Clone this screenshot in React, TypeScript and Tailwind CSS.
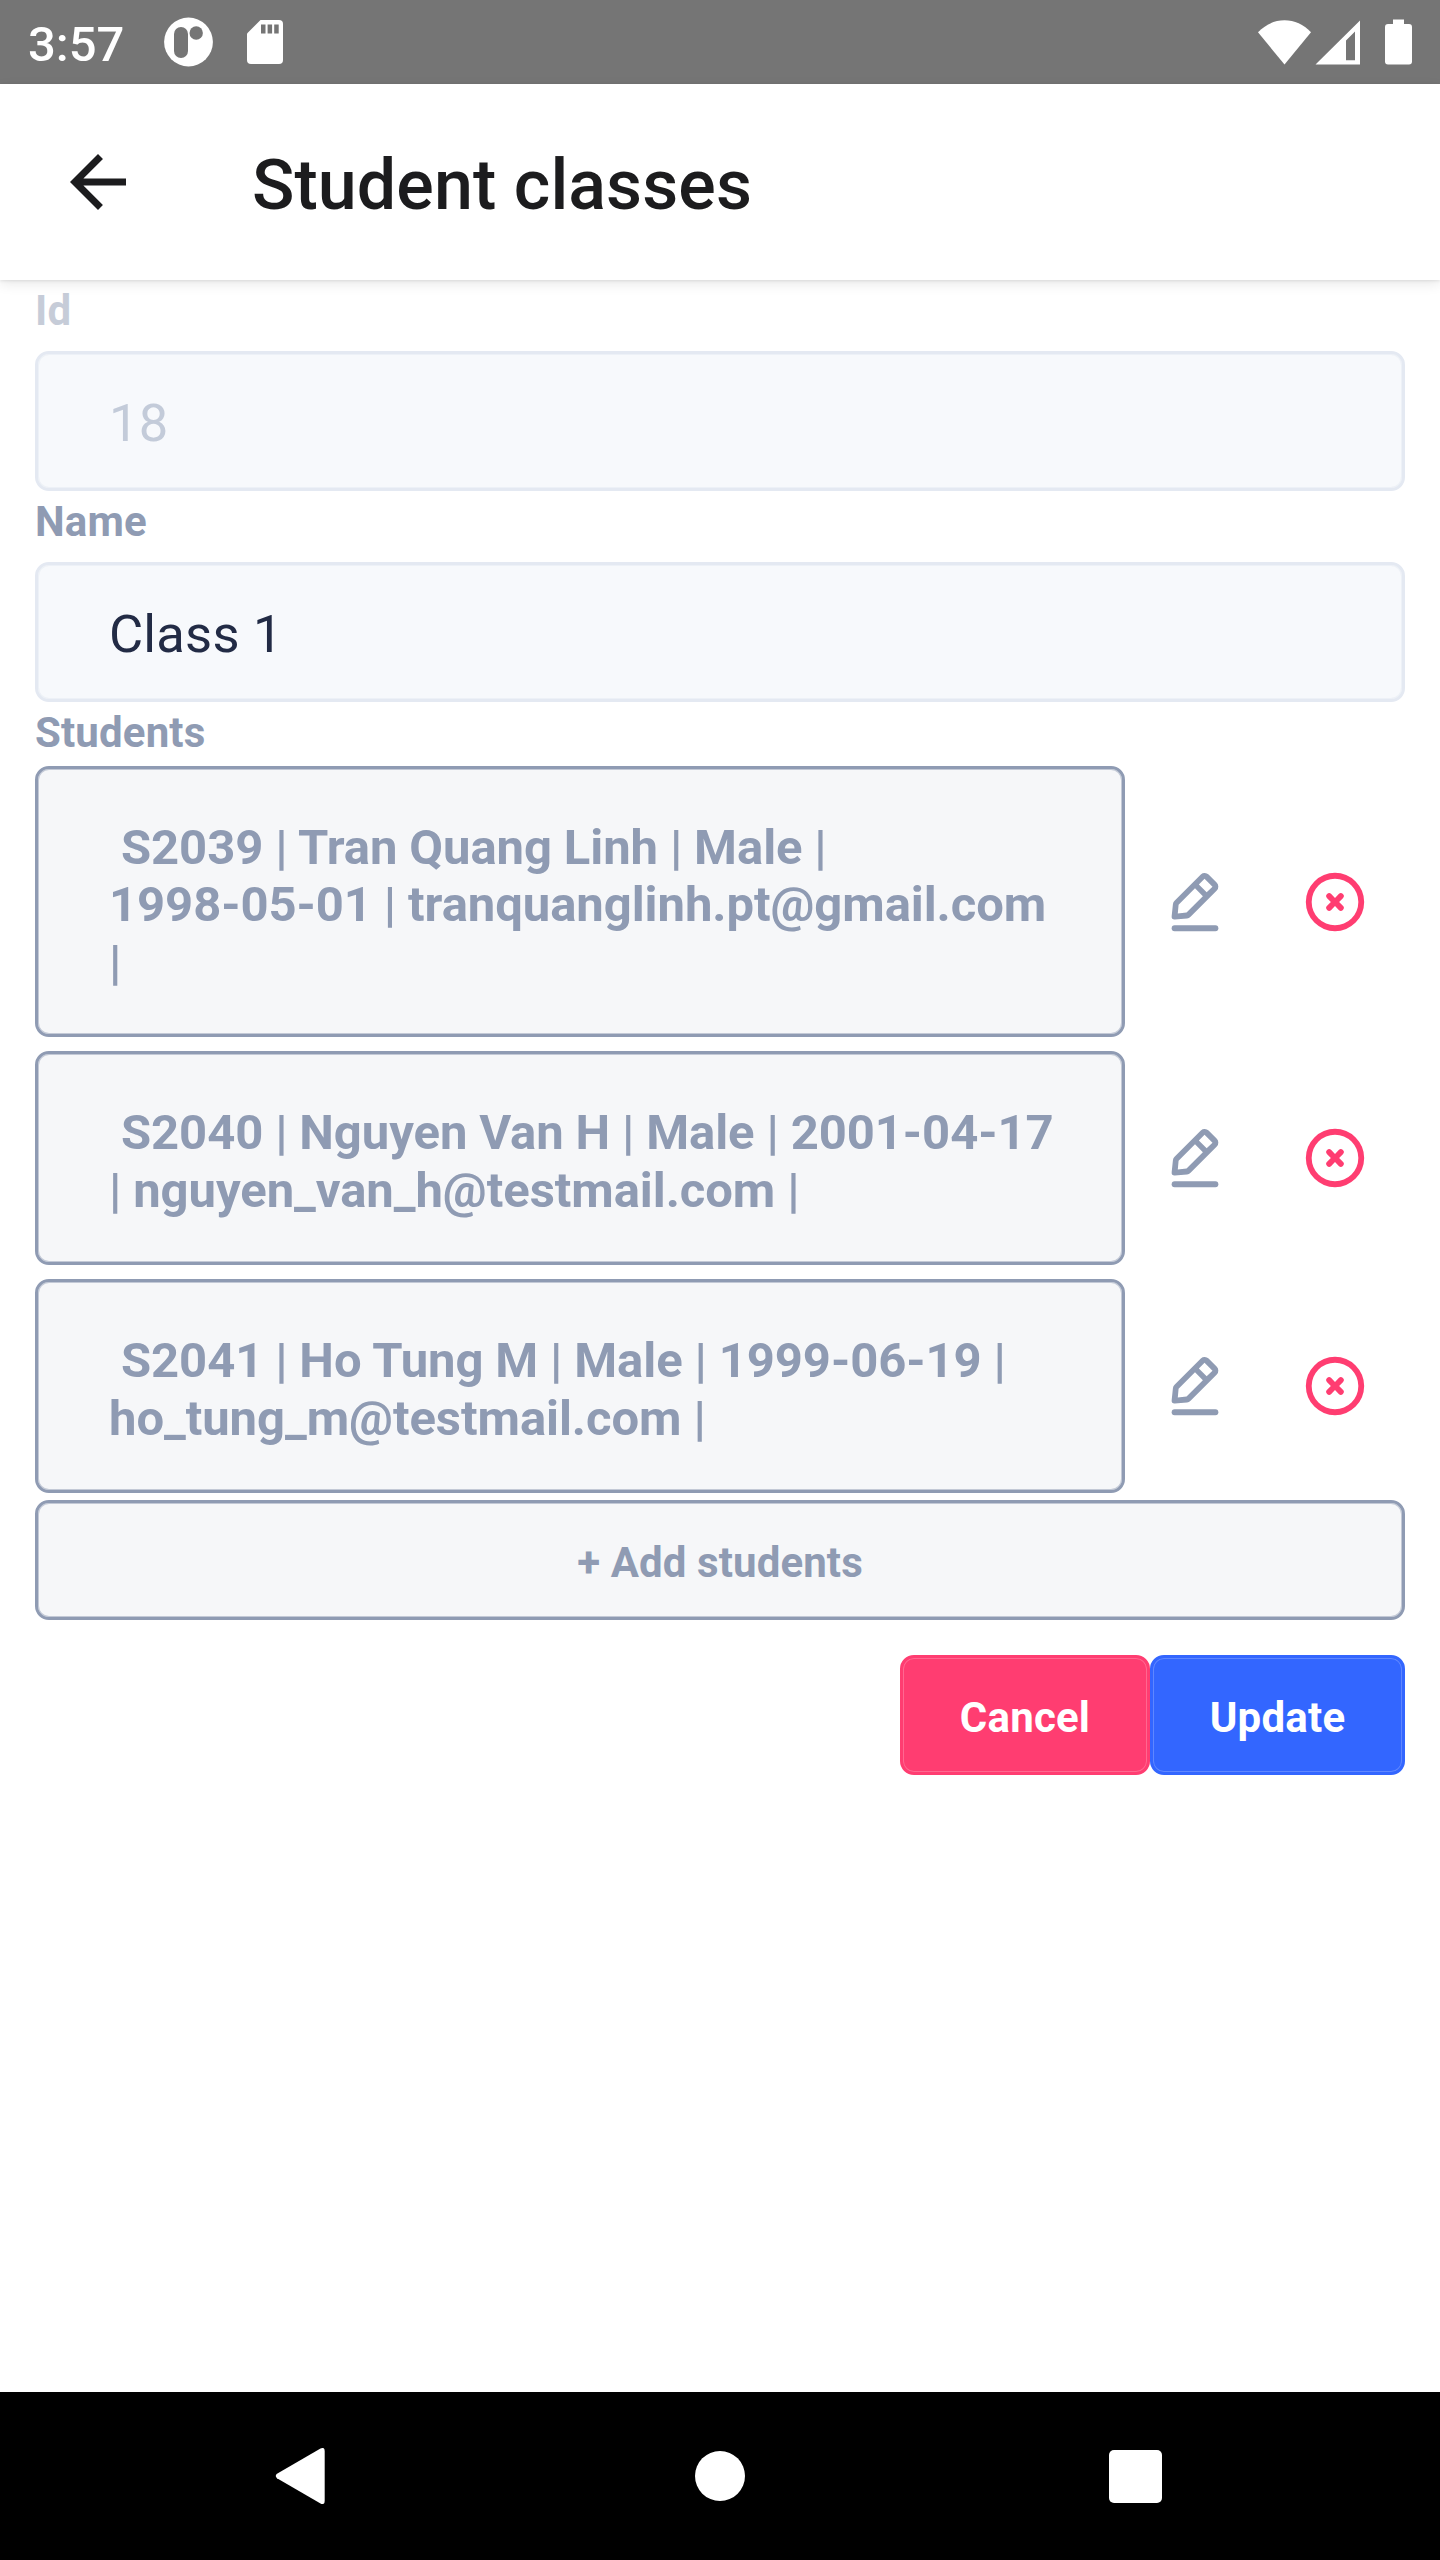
import React from "react";

const students = [
  {
    height: "h-[271px]",
    text: " S2039 | Tran Quang Linh | Male |\n1998-05-01 | tranquanglinh.pt@gmail.com\n|",
  },
  {
    height: "h-[214px]",
    text: " S2040 | Nguyen Van H | Male | 2001-04-17\n| nguyen_van_h@testmail.com |",
  },
  {
    height: "h-[214px]",
    text: " S2041 | Ho Tung M | Male | 1999-06-19 |\nho_tung_m@testmail.com |",
  },
];

function StatusBar() {
  return (
    <div className="flex h-[84px] shrink-0 items-center bg-[#757575] text-white">
      <span className="mt-[5px] ml-[28px] w-[136px] text-[49px] leading-[84px] font-medium">3:57</span>
      <svg className="h-[50px] w-[50px]" viewBox="0 0 50 50">
        <circle cx="24.5" cy="25" r="24.4" fill="#fff" />
        <rect x="10" y="10" width="14" height="31" rx="7" fill="#757575" />
        <circle cx="32.2" cy="16" r="6.7" fill="#757575" />
      </svg>
      <svg className="ml-[33px] h-[44px] w-[36px]" viewBox="0 0 36 44">
        <path fill="#fff" d="M13.5 0H32a4 4 0 0 1 4 4v36a4 4 0 0 1-4 4H4a4 4 0 0 1-4-4V13.500z" />
        <path fill="#757575" d="M14 4.500h4.500v9H14zM20.600 4.500h4.500v9h-4.500zM27.200 4.500h4.500v9h-4.500z" />
      </svg>
      <div className="flex-1" />
      <svg className="h-[45px] w-[53px]" viewBox="0 0 53 45">
        <path fill="#fff" d="M0 12.300C7.500 4.500 16.500 0.300 26.500 0.300S45.500 4.500 53 12.300L26.500 44.500z" />
      </svg>
      <svg className="ml-[4px] h-[45px] w-[45px]" viewBox="0 0 45 45">
        <path fill="#fff" fillRule="evenodd" d="M45 0.500V44.500H0.500zM31 20.500V40.200h9V11.500z" />
      </svg>
      <svg className="mr-[28px] ml-[25px] h-[46px] w-[27px]" viewBox="0 0 27 46">
        <path
          fill="#fff"
          d="M8 0.500h11v4.500h5a3 3 0 0 1 3 3v34.500a3 3 0 0 1-3 3H3a3 3 0 0 1-3-3V8a3 3 0 0 1 3-3h5z"
        />
      </svg>
    </div>
  );
}

function Header() {
  return (
    <header className="relative z-10 flex h-[196px] shrink-0 items-center bg-white shadow-[0_1px_3px_rgba(0,0,0,0.09),0_4px_12px_rgba(0,0,0,0.09)]">
      <svg className="ml-[56px] h-[84px] w-[84px]" viewBox="0 0 24 24" fill="#1c1c1e">
        <path d="M20 11H7.830l5.590-5.590L12 4l-8 8 8 8 1.410-1.410L7.830 13H20v-2z" />
      </svg>
      <h1 className="ml-[112px] pt-[6px] text-[70px] leading-[82px] font-medium tracking-[0.07px] text-[#1c1c1e]">
        Student classes
      </h1>
    </header>
  );
}

function Field({ label, value, disabled }: { label: string; value: string; disabled?: boolean }) {
  return (
    <div className="flex flex-col">
      <label
        className={
          "h-[71px] pt-[6px] text-[42px] leading-[49px] font-bold tracking-[0.15px] text-[#8f9bb3] " +
          (disabled ? "opacity-50" : "")
        }
      >
        {label}
      </label>
      <div
        className={
          "flex h-[140px] items-center rounded-[14px] border-[3px] border-[#e4e9f2] bg-[#f7f9fc] pt-[4px] pl-[71px] text-[52.5px] tracking-[0.2px] shadow-[inset_0_0_0_1px_rgba(228,233,242,0.5)] " +
          (disabled ? "text-[#c3cbd9]" : "text-[#222b45]")
        }
      >
        {value}
      </div>
    </div>
  );
}

function EditIcon() {
  return (
    <svg className="h-[70px] w-[70px]" viewBox="0 0 24 24" fill="#8f9bb3">
      <path d="M19 20H5a1 1 0 0 0 0 2h14a1 1 0 0 0 0-2z" />
      <path d="M5 18h.09l4.170-.38a2 2 0 0 0 1.210-.57l9-9a1.920 1.920 0 0 0-.07-2.710L16.660 2.600A2 2 0 0 0 14 2.530l-9 9a2 2 0 0 0-.57 1.210L4 16.910A1 1 0 0 0 5 18zM15.270 4L18 6.730l-2 1.950L13.320 6zm-8.900 8.910L12 7.320l2.700 2.700-5.600 5.600-3 .28z" />
    </svg>
  );
}

function RemoveIcon() {
  return (
    <svg className="h-[70px] w-[70px]" viewBox="0 0 24 24" fill="#ff3d71">
      <path d="M12 2a10 10 0 1 0 10 10A10 10 0 0 0 12 2zm0 18a8 8 0 1 1 8-8 8 8 0 0 1-8 8z" />
      <path d="M14.710 9.290a1 1 0 0 0-1.420 0L12 10.590l-1.290-1.300a1 1 0 0 0-1.420 1.420l1.300 1.290-1.300 1.290a1 1 0 0 0 0 1.420 1 1 0 0 0 1.420 0l1.290-1.300 1.290 1.300a1 1 0 0 0 1.420 0 1 1 0 0 0 0-1.420L13.410 12l1.300-1.290a1 1 0 0 0 0-1.420z" />
    </svg>
  );
}

export default function App() {
  return (
    <div className="flex h-[2560px] w-[1440px] flex-col overflow-hidden bg-white font-[Roboto,sans-serif]">
      <StatusBar />
      <Header />
      <main className="flex flex-1 flex-col px-[35px]">
        <Field label="Id" value="18" disabled />
        <Field label="Name" value="Class 1" />
        <div className="h-[64px] pt-[6px] text-[42px] leading-[49px] font-bold tracking-[0.15px] text-[#8f9bb3]">
          Students
        </div>
        <div className="flex flex-col gap-[14px]">
          {students.map((s) => (
            <div key={s.text} className="flex items-center">
              <div
                className={
                  "flex w-[1090px] items-center rounded-[14px] border-[3px] border-[#8f9bb3] bg-[#f6f7f9] pt-[7px] pl-[71px] shadow-[inset_0_0_0_1px_rgba(143,155,179,0.5)] " +
                  s.height
                }
              >
                <p className="text-[49px] leading-[57.4px] font-bold tracking-[-0.06px] [word-spacing:-0.2px] whitespace-pre text-[#8f9bb3]">
                  {s.text}
                </p>
              </div>
              <button className="ml-[35px]">
                <EditIcon />
              </button>
              <button className="ml-[70px]">
                <RemoveIcon />
              </button>
            </div>
          ))}
        </div>
        <button className="mt-[7px] h-[120px] rounded-[14px] border-[3px] border-[#8f9bb3] bg-[#f6f7f9] pt-[5px] text-[42px] font-bold tracking-[0.1px] text-[#8f9bb3] shadow-[inset_0_0_0_1px_rgba(143,155,179,0.5)]">
          + Add students
        </button>
        <div className="mt-[35px] flex justify-end text-[42px] font-bold tracking-[0.2px] text-white">
          <button className="h-[120px] w-[250px] rounded-[14px] border-[3px] border-[#ff3d71] bg-[#ff3d71] pt-[5px] shadow-[inset_0_0_0_1px_rgba(255,255,255,0.22)]">
            Cancel
          </button>
          <button className="h-[120px] w-[255px] rounded-[14px] border-[3px] border-[#3366ff] bg-[#3366ff] pt-[5px] shadow-[inset_0_0_0_1px_rgba(255,255,255,0.22)]">
            Update
          </button>
        </div>
      </main>
      <nav className="flex h-[168px] shrink-0 items-center bg-black">
        <svg className="ml-[275px] h-[56px] w-[50px]" viewBox="0 0 50 56">
          <path
            fill="#fff"
            d="M45.500 0.600Q49.700 -1.500 49.700 3V53Q49.700 57.500 45.500 55.400L2 30.200Q-0.500 28 2 25.800z"
          />
        </svg>
        <div className="ml-[370px] h-[50px] w-[50px] rounded-full bg-white" />
        <div className="ml-[363.5px] h-[53px] w-[53px] rounded-[5px] bg-white" />
      </nav>
    </div>
  );
}
